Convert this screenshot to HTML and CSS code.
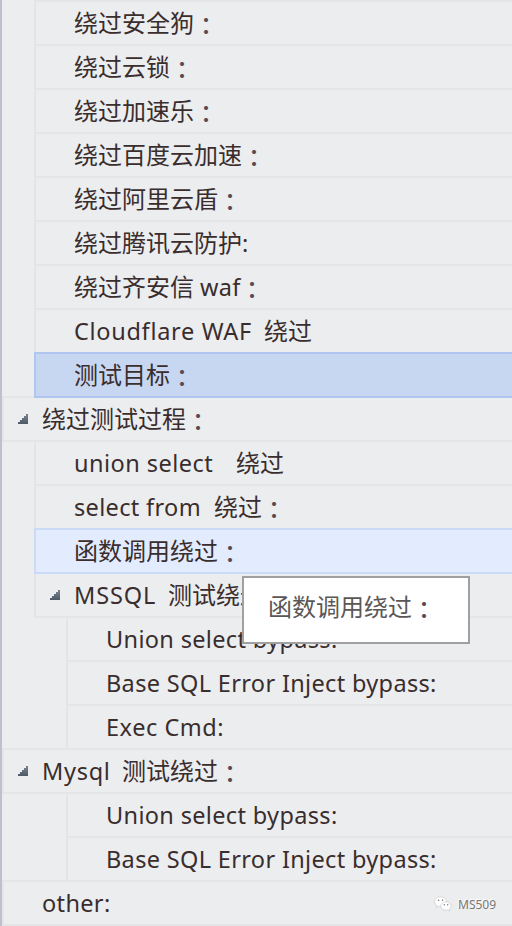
FILE: index.html
```html
<!DOCTYPE html>
<html lang="zh-CN">
<head>
<meta charset="utf-8">
<title>MS509</title>
<link rel="stylesheet" href="styles.css">
</head>
<body>
<nav class="tree">
  <div class="row l1"><span>绕过安全狗</span><span class="colon">：</span></div>
  <div class="row l1"><span>绕过云锁</span><span class="colon">：</span></div>
  <div class="row l1"><span>绕过加速乐</span><span class="colon">：</span></div>
  <div class="row l1"><span>绕过百度云加速</span><span class="colon">：</span></div>
  <div class="row l1"><span>绕过阿里云盾</span><span class="colon">：</span></div>
  <div class="row l1"><span>绕过腾讯云防护</span><span class="latin tail">:</span></div>
  <div class="row l1"><span>绕过齐安信</span><span class="latin waf">waf</span><span class="colon">：</span></div>
  <div class="row l1"><span class="latin cloudflare">Cloudflare WAF</span><span>绕过</span></div>
  <div class="row l1 selected"><span>测试目标</span><span class="colon">：</span></div>
  <div class="row l0"><i class="arrow"></i><span>绕过测试过程</span><span class="colon">：</span></div>
  <div class="row l1"><span class="latin union">union select</span><span>绕过</span></div>
  <div class="row l1"><span class="latin from">select from</span><span>绕过</span><span class="colon">：</span></div>
  <div class="row l1 hover"><span>函数调用绕过</span><span class="colon">：</span></div>
  <div class="row l1"><i class="arrow"></i><span class="latin mssql">MSSQL</span><span>测试绕过</span><span class="colon">：</span></div>
  <div class="row l2"><span class="latin bypass">Union select bypass:</span></div>
  <div class="row l2"><span class="latin base">Base SQL Error Inject bypass:</span></div>
  <div class="row l2"><span class="latin exec">Exec Cmd:</span></div>
  <div class="row l0"><i class="arrow"></i><span class="latin mysql">Mysql</span><span>测试绕过</span><span class="colon">：</span></div>
  <div class="row l2"><span class="latin bypass">Union select bypass:</span></div>
  <div class="row l2"><span class="latin base">Base SQL Error Inject bypass:</span></div>
  <div class="row l0"><span class="latin other">other:</span></div>
</nav>
<div class="tooltip"><span>函数调用绕过</span><span class="colon">：</span></div>
<div class="watermark">
  <svg width="18" height="16" viewBox="0 0 18 16">
    <g fill="#fff" stroke="#bbb" stroke-width=".5">
      <path d="M6.500.8C3.200.8.6 2.900.6 5.600c0 1.500.8 2.800 2.100 3.700L2 11.400l2.400-1.200c.7.200 1.400.3 2.100.3 3.300 0 5.900-2.200 5.900-4.900S9.800.8 6.500.8Z"/>
      <path d="M12 5.800c-3 0-5.200 1.900-5.200 4.200s2.200 4.200 5.200 4.200c.7 0 1.300-.1 1.800-.3l2 1-.6-1.700c1.200-.8 1.900-1.900 1.900-3.200 0-2.300-2.300-4.200-5.100-4.200Z"/>
    </g>
    <g fill="#777"><circle cx="4.600" cy="4.200" r=".8"/><circle cx="8.500" cy="4.200" r=".8"/><circle cx="10.300" cy="8.800" r=".7"/><circle cx="13.700" cy="8.800" r=".7"/></g>
  </svg>
  <span>MS509</span>
</div>
</body>
</html>
```
FILE: styles.css
```css
* { box-sizing: border-box; }
body {
  margin: 0;
  height: 926px;
  overflow: hidden;
  position: relative;
  background: #ecedef;
  color: #3a2d2d;
  font: 24px/40px "Noto Sans CJK SC", sans-serif;
}
.tree {
  height: 926px;
  overflow: hidden;
  border-left: 2px solid #c0bfce;
}
.row {
  display: flex;
  align-items: center;
  height: 46px;
  margin-bottom: -2px;
  border: 2px solid #e5e5e7;
  border-right: 0;
  white-space: pre;
  position: relative;
}
.row > span { display: block; flex: none; height: 42px; }
.l0 { padding-left: 38px; }
.l1 { margin-left: 32px; padding-left: 38px; }
.l2 { margin-left: 64px; padding-left: 38px; }
.selected { background: #c7d7f1; border-color: #b0c6f0; z-index: 1; }
.hover { background: #e2ecfe; border-color: #cbdaf6; z-index: 1; }
.row > .colon,
.tooltip .colon { font-family: "Noto Sans CJK JP", sans-serif; font-weight: 500; line-height: 46px; color: #5b4a4e; }
.row > .latin { font-family: "Noto Sans", sans-serif; font-size: 23.5px; line-height: 42px; letter-spacing: .34px; }
.arrow {
  width: 10px;
  height: 10px;
  margin: 0 14px 0 -24px;
  background: linear-gradient(#7b8592, #4d5866);
  clip-path: polygon(100% 0, 100% 100%, 0 100%, 0 80%, 20% 80%, 20% 60%, 40% 60%, 40% 40%, 60% 40%, 60% 20%, 80% 20%, 80% 0);
}
.waf { width: 46px; padding-left: 6px; }
.row > .cloudflare { width: 190px; letter-spacing: .7px; }
.row > .union { width: 162px; letter-spacing: .46px; }
.from { width: 140px; }
.row > .mssql { width: 94px; letter-spacing: .9px; }
.row > .exec { letter-spacing: .55px; }
.row > .mysql { width: 80px; letter-spacing: .7px; }
.tooltip {
  position: absolute;
  left: 242px;
  top: 576px;
  z-index: 2;
  display: flex;
  width: 228px;
  height: 68px;
  padding: 8px 0 0 24px;
  background: #fff;
  border: 2px solid #a0a0a0;
  color: #5c5757;
}
.watermark {
  position: absolute;
  left: 434px;
  top: 896px;
  display: flex;
  gap: 6px;
  color: #777;
  font: 12px/18px "Noto Sans", sans-serif;
  text-shadow: -1px -1px 0 #fff;
}
```
